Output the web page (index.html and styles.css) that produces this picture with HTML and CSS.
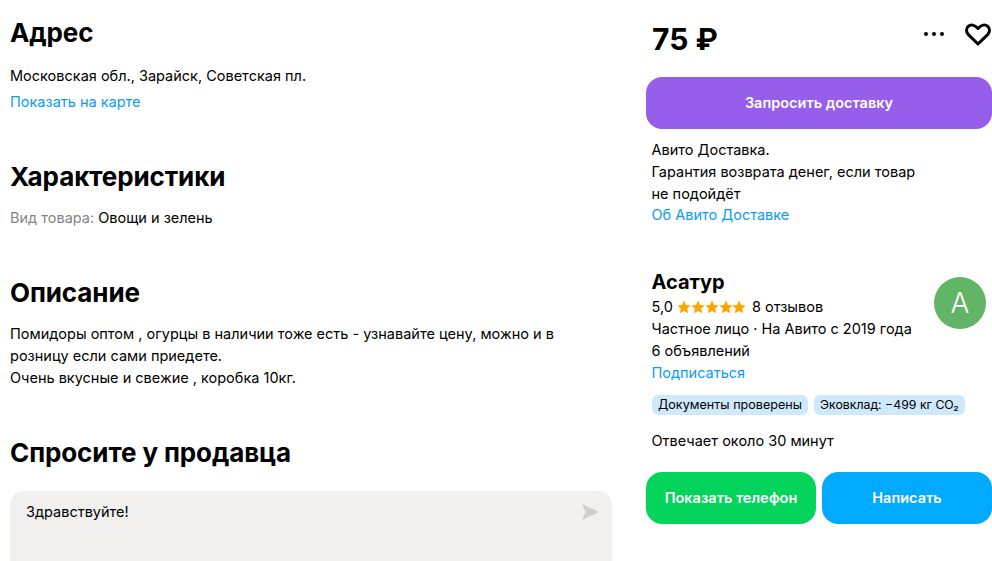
FILE: index.html
```html
<!DOCTYPE html>
<html lang="ru">
<head>
  <meta charset="UTF-8" />
  <meta name="viewport" content="width=device-width, initial-scale=1" />
  <title>Помидоры оптом</title>
  <link rel="stylesheet" href="styles.css">
</head>
<body>
  <div class="page">
    <div class="main">
      <section class="block block-address">
        <h2>Адрес</h2>
        <p class="address">Московская обл., Зарайск, Советская пл.</p>
        <a class="link" href="#">Показать на карте</a>
      </section>

      <section class="block block-params">
        <h2>Характеристики</h2>
        <p><span class="muted">Вид товара:</span> Овощи и зелень</p>
      </section>

      <section class="block block-desc">
        <h2>Описание</h2>
        <p>Помидоры оптом , огурцы в наличии тоже есть - узнавайте цену, можно и в<br>розницу если сами приедете.<br>Очень вкусные и свежие , коробка 10кг.</p>
      </section>

      <section class="block block-ask">
        <h2>Спросите у продавца</h2>
        <div class="ask-box">
          <span>Здравствуйте!</span>
          <svg class="send" width="17" height="16" viewBox="0 0 17 16"><path d="M0 0 17 8 0 16 3.500 8z" fill="#cfcecb"/></svg>
        </div>
      </section>
    </div>

    <aside class="side">
      <div class="price-row">
        <div class="price">75 ₽</div>
        <div class="price-icons">
          <svg width="22" height="6" viewBox="0 0 22 6"><circle cx="3" cy="3" r="2" fill="#000"/><circle cx="11" cy="3" r="2" fill="#000"/><circle cx="19" cy="3" r="2" fill="#000"/></svg>
          <svg width="26" height="23" viewBox="0 0 26 23"><path d="M13 21 3.400 11.600C.9 9 .9 5.400 3.200 3.300 5.600 1.200 9.500 1.500 13 5.500 16.500 1.500 20.400 1.200 22.800 3.300 25.100 5.400 25.100 9 22.600 11.600z" fill="none" stroke="#000" stroke-width="3" stroke-linejoin="round"/></svg>
        </div>
      </div>

      <button class="btn btn-purple">Запросить доставку</button>

      <div class="delivery">
        <p>Авито Доставка.</p>
        <p>Гарантия возврата денег, если товар<br>не подойдёт</p>
        <a class="link" href="#">Об Авито Доставке</a>
      </div>

      <div class="seller">
        <div class="seller-info">
          <div class="seller-name">Асатур</div>
          <div class="seller-rating">
            <span>5,0</span>
            <svg class="stars" width="69" height="14" viewBox="0 0 69 14" fill="#ffa500">
              <path id="star" d="M7 .5 9 4.900 13.700 5.400 10.200 8.600 11.200 13.300 7 10.900 2.800 13.300 3.800 8.600.3 5.400 5 4.900z"/>
              <use href="#star" x="14"/>
              <use href="#star" x="28"/>
              <use href="#star" x="42"/>
              <use href="#star" x="55"/>
            </svg>
            <span>8 отзывов</span>
          </div>
          <p>Частное лицо · На Авито с 2019 года</p>
          <p>6 объявлений</p>
          <a class="link" href="#">Подписаться</a>
        </div>
        <div class="avatar">А</div>
      </div>

      <div class="tags">
        <span class="tag">Документы проверены</span>
        <span class="tag tag-eco">Эковклад: −499 кг CO₂</span>
      </div>

      <p class="reply">Отвечает около 30 минут</p>

      <div class="actions">
        <button class="btn btn-green">Показать телефон</button>
        <button class="btn btn-blue">Написать</button>
      </div>
    </aside>
  </div>
</body>
</html>
```

FILE: styles.css
```css
* {
  box-sizing: border-box;
  margin: 0;
  padding: 0;
}
html, body {
  height: 561px;
  overflow: hidden;
}
body {
  font-family: Inter, 'Noto Sans', sans-serif;
  font-size: 14.5px;
  line-height: 22px;
  color: #000;
  background: #fff;
}
.page {
  display: flex;
  padding-left: 10px;
}
.main {
  width: 602px;
  margin-right: 34px;
  padding-top: 15px;
}
h2 {
  font-size: 26px;
  line-height: 36px;
  font-weight: 700;
  letter-spacing: -0.1px;
}
.block-address {
  height: 144px;
}
.address {
  margin-top: 14px;
  margin-bottom: 4px;
}
.block-params {
  height: 116px;
}
.block-params p {
  margin-top: 12px;
}
.block-desc {
  height: 160px;
}
.block-desc p {
  margin-top: 12px;
}
.muted {
  color: #858585;
}
.link {
  color: #0a9cf5;
  text-decoration: none;
  display: block;
}
.ask-box {
  margin-top: 20px;
  height: 70px;
  background: #f1f0ef;
  border-radius: 14px 14px 0 0;
  padding: 10px 16px;
  position: relative;
}
.send {
  position: absolute;
  top: 13px;
  right: 13px;
}
.side {
  width: 346px;
}
.price-row {
  display: flex;
  justify-content: space-between;
  padding: 17px 1px 0 6px;
  height: 77px;
}
.price {
  font-size: 30px;
  line-height: 44px;
  font-weight: 700;
}
.price-icons {
  display: flex;
  align-items: center;
  gap: 20px;
  height: 34px;
}
.btn {
  display: block;
  height: 52px;
  padding-bottom: 2px;
  border: none;
  border-radius: 16px;
  color: #fff;
  font-family: inherit;
  font-size: 14.5px;
  font-weight: 600;
}
.btn-purple {
  width: 100%;
  background: #965eeb;
}
.delivery {
  padding: 10px 5.500px 0;
  height: 140px;
}
.delivery .link {
  margin-top: -1px;
}
.seller {
  display: flex;
  justify-content: space-between;
  padding-left: 5.500px;
}
.seller-name {
  font-size: 20px;
  line-height: 26px;
  font-weight: 700;
}
.seller-rating {
  display: flex;
  align-items: center;
  gap: 4px;
  margin-top: 1px;
}
.stars {
  margin-right: 2px;
}
.seller-info p {
  line-height: 22px;
}
.avatar {
  width: 52px;
  height: 52px;
  border-radius: 50%;
  background: #62b466;
  color: #fff;
  font-size: 28px;
  font-weight: 300;
  display: flex;
  align-items: center;
  justify-content: center;
  margin-top: 8px;
  margin-right: 6px;
}
.tags {
  display: flex;
  gap: 6px;
  padding-left: 6px;
  margin-top: 11px;
}
.tag {
  background: #cfe9fc;
  border-radius: 6px;
  font-size: 12.600px;
  line-height: 20px;
  padding: 0 6px;
}
.tag-eco {
  font-size: 12.300px;
}
.reply {
  padding-left: 5.500px;
  margin-top: 15px;
}
.actions {
  display: flex;
  gap: 6px;
  margin-top: 20px;
}
.btn-green {
  width: 170px;
  background: #04d45c;
}
.btn-blue {
  width: 170px;
  background: #00aaff;
}
```
